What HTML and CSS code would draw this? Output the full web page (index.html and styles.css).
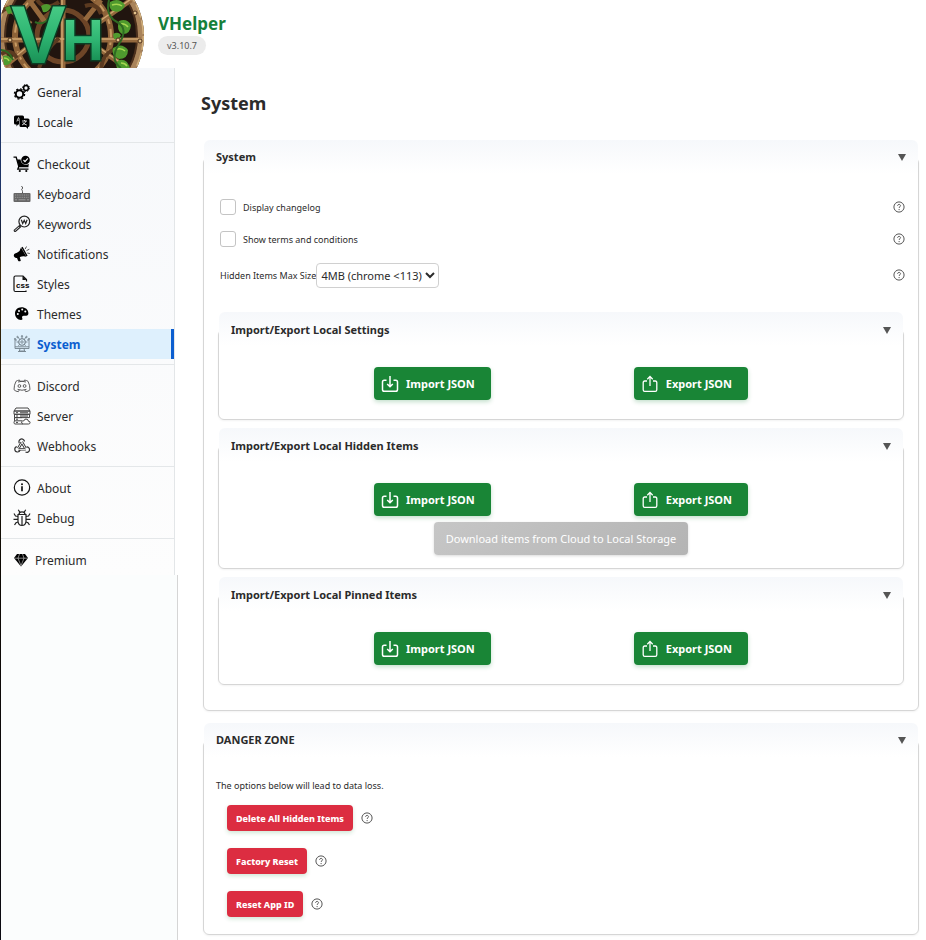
FILE: index.html
```html
<!DOCTYPE html>
<html lang="en">
<head>
    <meta charset="utf-8">
    <title>VHelper</title>
    <link rel="stylesheet" href="styles.css">
</head>
<body>
    <!-- shared symbols -->
    <svg class="defs" aria-hidden="true">
        <symbol id="help" viewBox="0 0 12 12">
            <circle cx="6" cy="6" r="5.1" fill="none" stroke="#555" stroke-width="1"/>
            <path d="M4.6 4.8c0-1.9 2.9-1.8 2.9-.1 0 1-1.4 1.1-1.4 2.2" fill="none" stroke="#555" stroke-width="1"/>
            <circle cx="6.1" cy="8.6" r=".65" fill="#555"/>
        </symbol>
        <symbol id="import" viewBox="0 0 18 18">
            <path d="M5.5 5.2H3.2Q1.5 5.2 1.5 7v7.500q0 1.800 1.700 1.800h11.600q1.700 0 1.700-1.800V7q0-1.800-1.700-1.800h-2.300M9 1v10.500M6.200 9L9 11.800 11.800 9" fill="none" stroke="#fff" stroke-width="1.500"/>
        </symbol>
        <symbol id="export" viewBox="0 0 18 18">
            <path d="M6 6H3.700Q2.200 6 2.200 7.600v7.100q0 1.600 1.500 1.600h10.600q1.500 0 1.500-1.600V7.600Q15.800 6 14.300 6H12M9 11V1.500M6.300 4.200L9 1.400l2.700 2.800" fill="none" stroke="#fff" stroke-width="1.300"/>
        </symbol>
    </svg>

    <header class="header">
        <svg class="logo" viewBox="0 0 143 68" role="img" aria-label="VH logo">
            <defs>
                <clipPath id="disc"><circle cx="70" cy="36" r="73"/></clipPath>
                <linearGradient id="jade" x1="0" y1="0" x2="0" y2="1">
                    <stop offset="0" stop-color="#55d68f"/>
                    <stop offset=".5" stop-color="#2fb673"/>
                    <stop offset="1" stop-color="#0d7c45"/>
                </linearGradient>
            </defs>
            <g clip-path="url(#disc)">
                <rect width="143" height="68" fill="#21150f"/>
                <!-- wooden rims -->
                <circle cx="70" cy="36" r="70" fill="none" stroke="#a9835a" stroke-width="7"/>
                <circle cx="70" cy="36" r="66" fill="none" stroke="#4b2f1c" stroke-width="2"/>
                <circle cx="70" cy="36" r="73" fill="none" stroke="#d3b17d" stroke-width="3" stroke-dasharray="14 3"/>
                <circle cx="62" cy="36" r="48" fill="none" stroke="#8d6238" stroke-width="6"/>
                <circle cx="62" cy="36" r="48" fill="none" stroke="#c79a63" stroke-width="2" stroke-dasharray="9 5"/>
                <circle cx="62" cy="36" r="26" fill="none" stroke="#6d4527" stroke-width="5"/>
                <!-- spokes -->
                <path d="M0 40H140M62 0v68M0 4l30 20M4 66l32-26M96 24l34-24M94 46l32 22M28 0l16 22M84 20L100 0" stroke="#94683d" stroke-width="5"/>
                <path d="M0 39H140M61 0v68M0 3l30 20M4 65l32-26M96 23l34-24M94 45l32 22" stroke="#d0a772" stroke-width="1.500"/>
                <path d="M0 12q6-6 14-4M0 54q10-6 16 4M36 0q8 12 22 2M84 6q12-4 16 8M38 68q6-18 20-30M100 68q2-14 12-18" fill="none" stroke="#5b3a20" stroke-width="4"/>
                <!-- leaves -->
                <g fill="#4f9a2e">
                    <path d="M109 2q9-5 15 3-3 9-12 6-5-3-3-9zM118 21q8-3 12 4-1 10-9 9-6-4-3-13zM112 48q9-6 15 2 0 9-9 9-8-3-6-11zM118 60q8-2 11 8h-13q-2-5 2-8z"/>
                    <path d="M2 56q7-2 9 4-2 6-8 5zM4 8q5-4 9 1-1 5-6 5zM40 6q6-4 10 0-2 7-8 6zM112 34q5-3 8 1-2 5-7 4z"/>
                </g>
                <path d="M111 5q6-2 10 1M119 24q5-1 8 3M114 50q6-3 10 1M120 63q4 0 6 3M3 58q4 0 5 3" fill="none" stroke="#a5d650" stroke-width="1.500"/>
                <path d="M108 0q-4 16 8 22t2 22 2 24M34 22q8 4 14-4M0 50q8 0 12 10" fill="none" stroke="#2f6a23" stroke-width="2"/>
                <g fill="#e3c28c" stroke="#4b2f1c">
                    <circle cx="134" cy="13" r="2"/>
                    <circle cx="139" cy="41" r="2"/>
                    <circle cx="9" cy="40" r="2"/>
                    <circle cx="117" cy="40" r="2"/>
                </g>
                <g class="logo-text">
                    <text x="10" y="63" font-size="82">V</text>
                    <text x="61" y="60" font-size="58">H</text>
                </g>
            </g>
        </svg>
        <div class="brand">
            <div class="brand-name">VHelper</div>
            <span class="version">v3.10.7</span>
        </div>
    </header>

    <div class="layout">
        <aside class="side">
            <nav class="menu">
                <div class="menu-group">
                    <a href="#general" class="menu-item">
                        <svg viewBox="0 0 18 18" fill="none" stroke="#000">
                            <circle cx="6.500" cy="11" r="3.700" stroke-width="2"/>
                            <circle cx="6.500" cy="11" r="5.100" stroke-width="1.300" stroke-dasharray="2 2"/>
                            <circle cx="13" cy="5" r="2.400" stroke-width="1.500"/>
                            <circle cx="13" cy="5" r="3.500" stroke-width="1" stroke-dasharray="1.400 1.350"/>
                        </svg>
                        General
                    </a>
                    <a href="#locale" class="menu-item">
                        <svg viewBox="0 0 18 18">
                            <path d="M2.500 2.500h7q1.500 0 1.500 1.500v2H8Q6 6 6 8v3.500H5L3.500 13.500v-2H2.500Q1 11.500 1 10V4q0-1.500 1.500-1.500z" fill="#000"/>
                            <path d="M3.800 8.500l1.700-4 1 2.300M4.500 7.200h1.500" fill="none" stroke="#fff" stroke-width=".7"/>
                            <path d="M8 5.500h7q1.500 0 1.500 1.500v5.500q0 1.500-1.500 1.500v2L13 14H8q-1.500 0-1.500-1.500V7Q6.500 5.500 8 5.500z" fill="#000"/>
                            <path d="M9 8h5M11.500 7v1M13 8q-1 3-4 4M9.800 9.200q1 2.300 4 2.800" fill="none" stroke="#fff" stroke-width=".8"/>
                        </svg>
                        Locale
                    </a>
                </div>
                <div class="menu-group">
                    <a href="#checkout" class="menu-item">
                        <svg viewBox="0 0 18 18">
                            <path d="M.5 2.200h2.700L5.800 11.500h9.700M5.800 11.500l-1 2.700h10.700" fill="none" stroke="#000" stroke-width="1.300"/>
                            <path d="M4 4.500h3.500q.5 4.500 5 5.300 2 .2 3.500-.8l-.6 2H5.800z" fill="#000"/>
                            <circle cx="12.500" cy="5" r="4.300" fill="#000"/>
                            <path d="M10.500 5l1.500 1.600 2.800-3.200" fill="none" stroke="#fff" stroke-width="1.200"/>
                            <circle cx="6.800" cy="16" r="1.100"/><circle cx="13.300" cy="16" r="1.100"/>
                        </svg>
                        Checkout
                    </a>
                    <a href="#keyboard" class="menu-item">
                        <svg viewBox="0 0 18 18">
                            <path d="M9.500 8.500V6.500Q9.500 5.500 8.800 5T9.800 3L8.500 1" fill="none" stroke="#555" stroke-width="1"/>
                            <rect x=".5" y="8" width="17" height="9" rx="1" fill="#666"/>
                            <path d="M2 10h14M2 12.300h14" stroke="#aaa" stroke-width=".8" stroke-dasharray="1 .8"/>
                            <path d="M2 14.800h2M5.500 14.800h7M14 14.800h2" stroke="#aaa" stroke-width=".8"/>
                        </svg>
                        Keyboard
                    </a>
                    <a href="#keywords" class="menu-item">
                        <svg viewBox="0 0 18 18" fill="none" stroke="#222">
                            <circle cx="11.300" cy="6.600" r="5.400" stroke-width="1.200"/>
                            <path d="M8.300 4.800l1.400 3.700 1.500-3.200 1.500 3.200 1.400-3.700" stroke-width="1.200"/>
                            <path d="M7.300 10.500l-1.200 1.200" stroke-width="1.200"/>
                            <path d="M6.300 10.700l1.200 1.200-4.800 4.300q-1.500.6-1.500-1z" stroke-width="1.100"/>
                        </svg>
                        Keywords
                    </a>
                    <a href="#notifications" class="menu-item">
                        <svg viewBox="0 0 18 18">
                            <path d="M8 2.500l5.500 9.300q-3.500-1-6.500.3l-.2.200 1 3.400q-1.800 1.300-2.800-.3l-1-2.500q-2 .6-3-1.300-.7-2 1-3l2-.8Q7.300 6.300 8 2.500z" fill="#000"/>
                            <path d="M9 2.200l5 8.800" stroke="#000" stroke-width="1.400"/>
                            <path d="M12.200 4l1.300-2.500M13.500 5.700l2.800-1.500M14.300 8l2.500.5" stroke="#444" stroke-width=".9"/>
                        </svg>
                        Notifications
                    </a>
                    <a href="#styles" class="menu-item">
                        <svg viewBox="0 0 18 18">
                            <path d="M3.500 16.500H2.500Q1 16.500 1 15V2.500Q1 1 2.500 1H10l3.500 3.500v2M3.500 16.500h9.500v-1" fill="none" stroke="#111" stroke-width="1.200"/>
                            <path d="M9.500 1v4h4z" fill="#111"/>
                            <text x="3" y="13" class="css-label">css</text>
                        </svg>
                        Styles
                    </a>
                    <a href="#themes" class="menu-item">
                        <svg viewBox="0 0 18 18">
                            <path d="M8.500 2.200C4.500 2.200 2 5 2 8.500s2.500 6.500 6 6.500c1.500 0 1.700-1 1.200-2-.5-1.200 0-2.300 1.500-2.300h2.500c1.500 0 2.200-1 2.200-2.500C15.400 4.500 12.300 2.200 8.500 2.200z" fill="#000"/>
                            <g fill="#fff">
                                <circle cx="4.800" cy="9" r="1"/><circle cx="6" cy="5.900" r="1"/>
                                <circle cx="9.200" cy="4.500" r="1"/><circle cx="12.300" cy="6.500" r="1"/>
                            </g>
                        </svg>
                        Themes
                    </a>
                    <a href="#system" class="menu-item active" aria-current="page">
                        <svg viewBox="0 0 18 18" fill="none" stroke="#72808a" stroke-width=".9">
                            <path d="M4 5H2v8.500h14V5h-2M2 11.800h14M7 13.500l-.6 2.500h5.200l-.6-2.500M5 16.500h8"/>
                            <circle cx="9" cy="7" r="3.200" stroke-width="1.100"/>
                            <circle cx="9" cy="7" r="1.200"/>
                            <path d="M9 3.800V1.500M6.700 4.500L5 2M11.300 4.500L13 2M5.800 7H3.500M12.200 7h2.300M6.700 9.500l-1.400 1.200M11.300 9.500l1.400 1.200"/>
                            <circle cx="9" cy="1.200" r=".7"/><circle cx="4.500" cy="2" r=".7"/><circle cx="13.500" cy="2" r=".7"/>
                            <circle cx="2" cy="4" r=".7"/><circle cx="16" cy="4" r=".7"/>
                        </svg>
                        System
                    </a>
                </div>
                <div class="menu-group">
                    <a href="#discord" class="menu-item">
                        <svg viewBox="0 0 18 18" fill="none" stroke="#555" stroke-width=".95">
                            <path d="M6.500 3Q4.500 3.300 3 4.300 1 8 1 12.700q1.700 1.800 4.300 2l1-1.700M11.500 3q2 .3 3.500 1.300 2 3.700 2 8.400-1.700 1.800-4.300 2l-1-1.700M6.500 3l.5 1.300h4l.5-1.300M5 5q4-1.500 8 0M4.500 12.300q4.500 1.900 9 0"/>
                            <circle cx="6.400" cy="9" r="1.400"/><circle cx="11.600" cy="9" r="1.400"/>
                        </svg>
                        Discord
                    </a>
                    <a href="#server" class="menu-item">
                        <svg viewBox="0 0 18 18" fill="none" stroke="#444" stroke-width="1">
                            <path d="M3 1h12l2 3H1zM1 4h16v3.300H1zM1.500 7.300h15v3.300h-15zM9 13.800H1.500v-3.200H9M10 17H2q-1 0-1-1.500t1-1.700"/>
                            <path d="M3 5.700h2M3 9h2M3 12.200h2M3 15.400h2"/>
                            <path d="M7 5.700h8M7 9h8" stroke="#777" stroke-width="1.600"/>
                            <path d="M10 17q-2-.5-1.200-2.500.8-1 2-.6.8-2.700 3.200-1.700 1.300.5 1.300 2 2 0 1.800 1.700-.3 1.100-1.500 1.100z" fill="#fff"/>
                        </svg>
                        Server
                    </a>
                    <a href="#webhooks" class="menu-item">
                        <svg viewBox="0 0 18 18" fill="none" stroke="#333">
                            <path d="M8.800 5.500L5.200 11.500M8.800 5l3.700 6.500M5 12.300h7.800" stroke-width="2.600"/>
                            <path d="M8.800 5.500L5.200 11.500M8.800 5l3.700 6.500M5 12.300h7.800" stroke="#fff" stroke-width="1"/>
                            <path d="M6.300 6.200A2.800 2.800 0 1 1 11.500 4.500M3.800 9.700a2.700 2.700 0 1 0 3.300 3.300M12.500 15a2.700 2.700 0 1 0 1-5" stroke-width="1.200"/>
                        </svg>
                        Webhooks
                    </a>
                </div>
                <div class="menu-group">
                    <a href="#about" class="menu-item">
                        <svg viewBox="0 0 18 18">
                            <circle cx="9" cy="8.500" r="7.700" fill="none" stroke="#111" stroke-width="1.200"/>
                            <circle cx="9" cy="5.300" r="1" fill="#111"/>
                            <path d="M9 7.300v5" stroke="#111" stroke-width="1.700"/>
                        </svg>
                        About
                    </a>
                    <a href="#debug" class="menu-item">
                        <svg viewBox="0 0 18 18" fill="none" stroke="#222" stroke-width="1.200">
                            <path d="M5 5.500h8v7q-.5 4-4 4t-4-4zM9 7v9.500M6 5.500q0-2.700 3-2.700t3 2.700M6.800 3.300L5.300.8M11.200 3.300L12.700.8"/>
                            <path d="M5 7.500L2.500 7 1 4.500M5 10.300H.5M5 13l-2 .8L1.500 16M13 7.500l2.500-.5L17 4.500M13 10.300h4.500M13 13l2 .8 1.500 2.200"/>
                        </svg>
                        Debug
                    </a>
                </div>
                <div class="menu-group">
                    <a href="#premium" class="menu-item premium">
                        <svg viewBox="0 0 16 16">
                            <path d="M4 2h8l3 4-7 8.500L1 6z" fill="#000"/>
                            <path d="M1.500 6.200h13M5 6.200l3 7.500 3-7.500M5 6.200L6.500 2M11 6.200L9.500 2" fill="none" stroke="#fff" stroke-width=".5"/>
                        </svg>
                        Premium
                    </a>
                </div>
            </nav>
            <div class="side-rest"></div>
        </aside>

        <main class="content">
            <h1>System</h1>

            <fieldset class="panel">
                <legend>System <span class="arrow"></span></legend>
                <div class="panel-body">
                    <div class="option">
                        <input type="checkbox" id="changelog">
                        <label for="changelog">Display changelog</label>
                        <svg class="help"><use href="#help"/></svg>
                    </div>
                    <div class="option">
                        <input type="checkbox" id="terms">
                        <label for="terms">Show terms and conditions</label>
                        <svg class="help"><use href="#help"/></svg>
                    </div>
                    <div class="option option-select">
                        <label for="maxSize">Hidden Items Max Size</label>
                        <select id="maxSize">
                            <option>4MB (chrome &lt;113)</option>
                        </select>
                        <svg class="help"><use href="#help"/></svg>
                    </div>

                    <fieldset class="panel sub">
                        <legend>Import/Export Local Settings <span class="arrow"></span></legend>
                        <div class="sub-body">
                            <div class="actions">
                                <button type="button" class="btn"><svg><use href="#import"/></svg>Import JSON</button>
                                <button type="button" class="btn"><svg><use href="#export"/></svg>Export JSON</button>
                            </div>
                        </div>
                    </fieldset>

                    <fieldset class="panel sub">
                        <legend>Import/Export Local Hidden Items <span class="arrow"></span></legend>
                        <div class="sub-body">
                            <div class="actions">
                                <button type="button" class="btn"><svg><use href="#import"/></svg>Import JSON</button>
                                <button type="button" class="btn"><svg><use href="#export"/></svg>Export JSON</button>
                            </div>
                            <button type="button" class="btn btn-disabled" disabled>Download items from Cloud to Local Storage</button>
                        </div>
                    </fieldset>

                    <fieldset class="panel sub">
                        <legend>Import/Export Local Pinned Items <span class="arrow"></span></legend>
                        <div class="sub-body">
                            <div class="actions">
                                <button type="button" class="btn"><svg><use href="#import"/></svg>Import JSON</button>
                                <button type="button" class="btn"><svg><use href="#export"/></svg>Export JSON</button>
                            </div>
                        </div>
                    </fieldset>
                </div>
            </fieldset>

            <fieldset class="panel">
                <legend>DANGER ZONE <span class="arrow"></span></legend>
                <div class="danger-body">
                    <p>The options below will lead to data loss.</p>
                    <div class="danger-row">
                        <button type="button" class="btn-danger">Delete All Hidden Items</button>
                        <svg class="help"><use href="#help"/></svg>
                    </div>
                    <div class="danger-row">
                        <button type="button" class="btn-danger">Factory Reset</button>
                        <svg class="help"><use href="#help"/></svg>
                    </div>
                    <div class="danger-row">
                        <button type="button" class="btn-danger">Reset App ID</button>
                        <svg class="help"><use href="#help"/></svg>
                    </div>
                </div>
            </fieldset>
        </main>
    </div>
</body>
</html>
```
FILE: styles.css
```css
* {
    box-sizing: border-box;
}

body {
    margin: 0;
    min-height: 100vh;
    display: flex;
    flex-direction: column;
    border-left: 1px solid;
    border-image: linear-gradient(#1d3466 20%, #16203a 25%, #3a2a0c 28%, #0e0903 60%, #0b0a12) 1;
    background: #fff;
    color: #2b2b2b;
    font-family: "Noto Sans", sans-serif;
    font-size: 9px;
}

button, select, input {
    font-family: inherit;
}

.defs {
    display: none;
}

/* header */
.header {
    display: flex;
    height: 68px;
}

.logo {
    width: 143px;
    height: 68px;
}

.logo-text {
    font-family: "Liberation Sans", sans-serif;
    font-weight: bold;
    fill: url(#jade);
    stroke: #0b3d24;
    stroke-width: 3px;
    paint-order: stroke;
}

.brand {
    padding: 12px 0 0 14px;
}

.brand-name {
    color: #15803a;
    font-size: 17px;
    font-weight: bold;
    line-height: 24px;
}

.version {
    display: inline-block;
    padding: 0 9px;
    border-radius: 10px;
    background: #ececec;
    color: #555;
    font-size: 9px;
    line-height: 19px;
}

.layout {
    flex: 1;
    display: flex;
}

/* sidebar */
.side {
    width: 177px;
    flex-shrink: 0;
    display: flex;
    flex-direction: column;
}

.menu {
    width: 174px;
    padding-top: 3px;
    border-right: 1px solid #e3e6e8;
    background: linear-gradient(#f6f8fb, #fdfdfd);
}

.side-rest {
    flex: 1;
    border-right: 1px solid #d5d5d5;
    background: #fbfdfd;
}

.menu-group {
    padding: 6px 0 5px;
    border-bottom: 1px solid #e4e7e9;
}

.menu-group:last-child {
    padding-bottom: 0;
    border-bottom: none;
}

.menu-item {
    display: flex;
    align-items: center;
    gap: 6px;
    height: 30px;
    padding-left: 12px;
    color: #2b2b2b;
    font-size: 12px;
    text-decoration: none;
}

.menu-item svg {
    width: 18px;
    height: 18px;
}

.menu-item.premium svg {
    width: 16px;
    height: 16px;
}

.menu-item.active {
    border-right: 3px solid #0b5ed0;
    background: #def0fd;
    color: #0b5ed0;
    font-weight: bold;
}

.css-label {
    font: bold 8px "Liberation Sans", sans-serif;
}

/* content */
.content {
    flex: 1;
    padding: 20px 7px 5px 23px;
}

h1 {
    margin: 0 0 21px;
    font-size: 18px;
    line-height: 31px;
}

.panel {
    min-width: 0;
    margin: 0 0 12px 2px;
    padding: 0;
    border: 1px solid #d6d6d6;
    border-radius: 6px;
    box-shadow: 0 1px 2px rgba(0, 0, 0, 0.05);
}

.panel:last-child {
    margin-bottom: 0;
}

.panel legend {
    display: flex;
    justify-content: space-between;
    align-items: center;
    width: 100%;
    padding: 8px 12px;
    border-radius: 6px 6px 0 0;
    background: linear-gradient(#f6f8fb, #fff);
    font-size: 11px;
    font-weight: bold;
    line-height: 18px;
}

.panel.sub legend {
    padding: 9px 12px 7px;
}

.arrow {
    border: 4px solid transparent;
    border-top: 7px solid #555;
    border-bottom: none;
}

.panel-body {
    padding: 17px 14px 25px;
}

.option {
    display: flex;
    align-items: center;
    height: 32px;
    margin-right: -1px;
    padding-left: 2px;
}

.option-select {
    height: 40px;
    margin-bottom: 17px;
}

.option input {
    appearance: none;
    width: 16px;
    height: 16px;
    margin: 0 7px 0 0;
    border: 1px solid #c4c4c4;
    border-radius: 3px;
    background: #fff;
}

.option select {
    height: 25px;
    border: 1px solid #d0d0d0;
    border-radius: 4px;
    background: #fff;
    color: #2b2b2b;
    font-size: 11px;
}

.help {
    width: 12px;
    height: 12px;
}

.option .help {
    margin-left: auto;
}

.panel.sub {
    margin: 0 0 8px;
}

.panel.sub:last-child {
    margin-bottom: 0;
}

.sub-body {
    padding: 21px 12px 13px;
    text-align: center;
}

.actions {
    display: flex;
    justify-content: space-evenly;
    margin-bottom: 6px;
}

.btn {
    display: inline-flex;
    align-items: center;
    gap: 7px;
    height: 33px;
    padding: 0 16px 0 7px;
    border: none;
    border-radius: 4px;
    background: #198536;
    box-shadow: 0 2px 4px rgba(25, 133, 54, 0.25);
    color: #fff;
    font-size: 11px;
    font-weight: bold;
}

.btn svg {
    width: 18px;
    height: 18px;
}

.btn-disabled {
    padding: 0 12px;
    background: linear-gradient(135deg, #c6c6c6, #b4b4b4);
    box-shadow: 0 1px 3px rgba(0, 0, 0, 0.15);
    font-weight: normal;
}

/* danger zone */
.danger-body {
    padding: 20px 12px 0;
}

.danger-body p {
    margin: 0 0 10px;
    line-height: 18px;
}

.danger-row {
    display: flex;
    align-items: center;
    gap: 8px;
    margin: 0 0 17px 11px;
}

.btn-danger {
    height: 26px;
    padding: 0 9px;
    border: none;
    border-radius: 4px;
    background: #dc2d41;
    box-shadow: 0 2px 4px rgba(25, 133, 54, 0.2);
    color: #fff;
    font-size: 9px;
    font-weight: 800;
}
```
